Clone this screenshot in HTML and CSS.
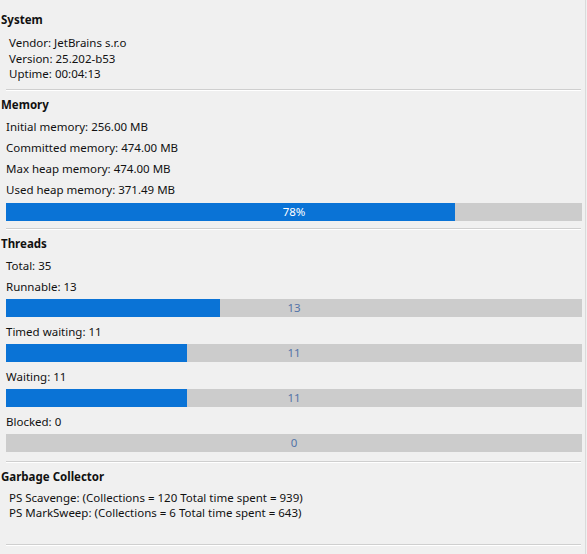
FILE: index.html
```html
<!DOCTYPE html>
<html>
<head>
<meta charset="utf-8">
<link rel="stylesheet" href="styles.css">
</head>
<body>
<div class="panel">
  <section class="group">
    <h2 class="title">System</h2>
    <div class="plain-lines">
      <div class="line">Vendor: JetBrains s.r.o</div>
      <div class="line">Version: 25.202-b53</div>
      <div class="line">Uptime: 00:04:13</div>
    </div>
  </section>
  <div class="sep"></div>
  <section class="group">
    <h2 class="title">Memory</h2>
    <div class="stats">
      <div class="line">Initial memory: 256.00 MB</div>
      <div class="line">Committed memory: 474.00 MB</div>
      <div class="line">Max heap memory: 474.00 MB</div>
      <div class="line">Used heap memory: 371.49 MB</div>
      <div class="bar"><div class="fill" style="width:78%"></div><span class="bar-text on-fill">78%</span></div>
    </div>
  </section>
  <div class="sep"></div>
  <section class="group">
    <h2 class="title">Threads</h2>
    <div class="threads">
      <div class="line">Total: 35</div>
      <div class="stat">
        <div class="line">Runnable: 13</div>
        <div class="bar"><div class="fill" style="width:37.1%"></div><span class="bar-text">13</span></div>
      </div>
      <div class="stat">
        <div class="line">Timed waiting: 11</div>
        <div class="bar"><div class="fill" style="width:31.4%"></div><span class="bar-text">11</span></div>
      </div>
      <div class="stat">
        <div class="line">Waiting: 11</div>
        <div class="bar"><div class="fill" style="width:31.4%"></div><span class="bar-text">11</span></div>
      </div>
      <div class="stat">
        <div class="line">Blocked: 0</div>
        <div class="bar"><div class="fill" style="width:0%"></div><span class="bar-text">0</span></div>
      </div>
    </div>
  </section>
  <div class="sep"></div>
  <section class="group">
    <h2 class="title">Garbage Collector</h2>
    <div class="plain-lines gc-lines">
      <div class="line">PS Scavenge: (Collections = 120 Total time spent = 939)</div>
      <div class="line">PS MarkSweep: (Collections = 6 Total time spent = 643)</div>
    </div>
  </section>
  <div class="sep gc-sep"></div>
</div>
</body>
</html>
```

FILE: styles.css
```css
* { box-sizing: border-box; }
html, body {
  margin: 0;
  padding: 0;
  background: #f0f0f0;
}
body {
  font-family: "Noto Sans", "DejaVu Sans", sans-serif;
  font-size: 11.5px;
  color: #111;
  width: 587px;
  height: 554px;
  overflow: hidden;
}
.panel {
  width: 586px;
  height: 554px;
  padding: 12px 0 0 0;
  border-right: 1px solid #dadada;
  display: flex;
  flex-direction: column;
}
.group {
  display: flex;
  flex-direction: column;
}
.title {
  margin: 0;
  padding-left: 1px;
  font-size: 11.5px;
  font-weight: bold;
  line-height: 16px;
  height: 16px;
}
.line {
  line-height: 16px;
  height: 16px;
  white-space: nowrap;
}
.plain-lines {
  margin-top: 7px;
  padding-left: 9px;
  display: flex;
  flex-direction: column;
}
.plain-lines .line {
  height: 15.5px;
  line-height: 15.5px;
}
.gc-lines {
  margin-top: 5px;
}
.stats {
  margin-top: 6px;
  padding-left: 6px;
  padding-right: 4px;
  display: flex;
  flex-direction: column;
  gap: 5px;
}
.threads {
  margin-top: 6px;
  padding-left: 6px;
  padding-right: 4px;
  display: flex;
  flex-direction: column;
  gap: 5px;
}
.stat {
  display: flex;
  flex-direction: column;
  gap: 4px;
  padding-bottom: 2px;
}
.bar {
  position: relative;
  height: 18px;
  width: 576px;
  background: #cccccc;
  display: flex;
  align-items: center;
  justify-content: center;
}
.fill {
  position: absolute;
  left: 0;
  top: 0;
  bottom: 0;
  background: #0a73d6;
}
.bar-text {
  position: relative;
  font-size: 11.5px;
  color: #5474a8;
  line-height: 16px;
}
.bar-text.on-fill {
  color: #ffffff;
}
.sep {
  margin: 7px 4px 6px 6px;
  height: 2px;
  border-top: 1px solid #cfcfcf;
  border-bottom: 1px solid #ffffff;
  flex: none;
}
.gc-sep {
  margin-top: 23px;
}
```
